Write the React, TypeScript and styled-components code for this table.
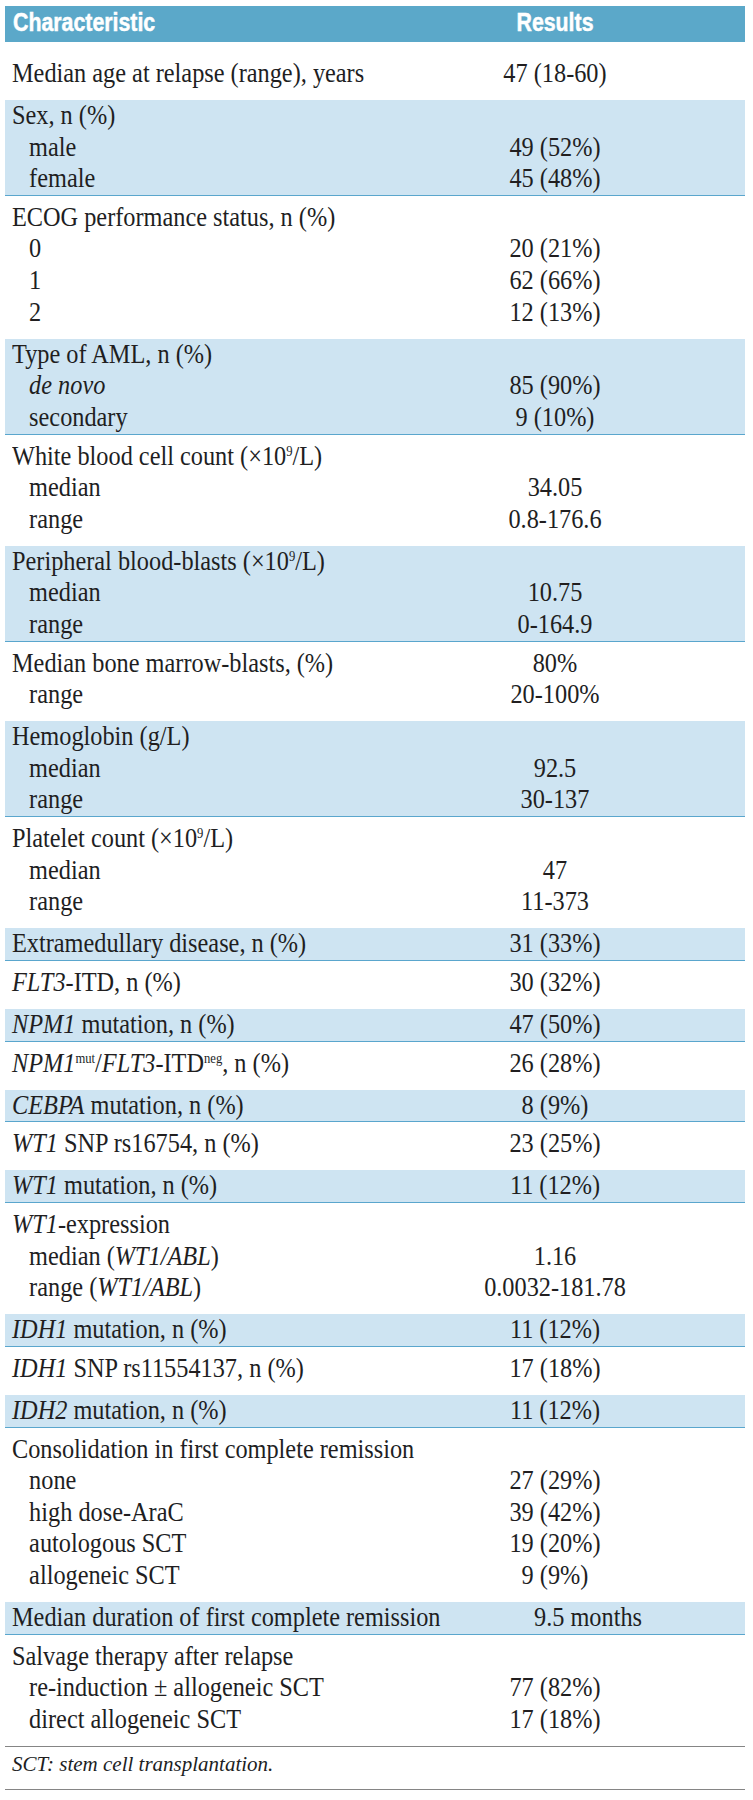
import React from 'react'
import styled, { createGlobalStyle } from 'styled-components'

const GlobalStyle = createGlobalStyle`
  html, body {
    margin: 0;
    padding: 0;
    background: #ffffff;
  }
`

const Page = styled.div`
  padding: 6px 8px 0 5px;
  width: 740px;
  color: #211e1f;
  font-family: 'Liberation Serif', 'Times New Roman', serif;
`

const HeaderBar = styled.div`
  display: grid;
  grid-template-columns: 1fr 200px;
  padding: 0 90px 3px 8px;
  height: 33px;
  line-height: 33px;
  background: #5ba8c9;
  color: #ffffff;
  font-family: 'Liberation Sans', Arial, sans-serif;
  font-weight: 700;
  font-size: 26px;
  -webkit-text-stroke: 0.5px #ffffff;
`

// the original heading face is a condensed gothic, so squeeze Arial-metric text
const HeaderCell = styled.div<{ $center?: boolean }>`
  text-align: ${p => (p.$center ? 'center' : 'left')};
  white-space: nowrap;
  transform: scaleX(0.82);
  transform-origin: ${p => (p.$center ? 'center' : 'left')} center;
`

const Block = styled.div<{ $shaded?: boolean; $first?: boolean }>`
  background: ${p => (p.$shaded ? '#cee4f2' : 'transparent')};
  border-bottom: ${p => (p.$shaded ? '1.5px solid #5aa6cd' : '0 none')};
  padding-top: ${p => (p.$shaded ? 0 : p.$first ? 16 : 6)}px;
  padding-bottom: ${p => (p.$shaded ? 0 : 10.5)}px;
`

const Line = styled.div`
  display: grid;
  grid-template-columns: 1fr 200px;
  padding: 0 90px 0 7px;
  line-height: 31.6px;
  font-size: 27px;
`

// body face is a condensed serif: Times metrics at 90% width
const Label = styled.div<{ $indent?: boolean }>`
  padding-left: ${p => (p.$indent ? 19 : 0)}px;
  white-space: nowrap;
  transform: scaleX(0.9);
  transform-origin: left center;
`

const Value = styled.div`
  text-align: center;
  white-space: nowrap;
  transform: scaleX(0.9);
  transform-origin: center;
`

const I = styled.i`
  font-style: italic;
`

const Sup = styled.sup`
  font-size: 0.52em;
  line-height: 0;
  vertical-align: 0.62em;
`

const Footnote = styled.div`
  border-top: 1px solid #858585;
  border-bottom: 1px solid #858585;
  padding: 0 0 8px 7px;
  line-height: 34px;
  font-size: 21px;
  font-style: italic;
`

type Sub = { label: React.ReactNode; value: string }
type Row = { label: React.ReactNode; value?: string; subs?: Sub[] }

const rows: Row[] = [
  { label: 'Median age at relapse (range), years', value: '47 (18-60)' },
  {
    label: 'Sex, n (%)',
    subs: [
      { label: 'male', value: '49 (52%)' },
      { label: 'female', value: '45 (48%)' },
    ],
  },
  {
    label: 'ECOG performance status, n (%)',
    subs: [
      { label: '0', value: '20 (21%)' },
      { label: '1', value: '62 (66%)' },
      { label: '2', value: '12 (13%)' },
    ],
  },
  {
    label: 'Type of AML, n (%)',
    subs: [
      { label: <I>de novo</I>, value: '85 (90%)' },
      { label: 'secondary', value: '9 (10%)' },
    ],
  },
  {
    label: (
      <>
        White blood cell count (×10<Sup>9</Sup>/L)
      </>
    ),
    subs: [
      { label: 'median', value: '34.05' },
      { label: 'range', value: '0.8-176.6' },
    ],
  },
  {
    label: (
      <>
        Peripheral blood-blasts (×10<Sup>9</Sup>/L)
      </>
    ),
    subs: [
      { label: 'median', value: '10.75' },
      { label: 'range', value: '0-164.9' },
    ],
  },
  {
    label: 'Median bone marrow-blasts, (%)',
    value: '80%',
    subs: [{ label: 'range', value: '20-100%' }],
  },
  {
    label: 'Hemoglobin (g/L)',
    subs: [
      { label: 'median', value: '92.5' },
      { label: 'range', value: '30-137' },
    ],
  },
  {
    label: (
      <>
        Platelet count (×10<Sup>9</Sup>/L)
      </>
    ),
    subs: [
      { label: 'median', value: '47' },
      { label: 'range', value: '11-373' },
    ],
  },
  { label: 'Extramedullary disease, n (%)', value: '31 (33%)' },
  {
    label: (
      <>
        <I>FLT3</I>-ITD, n (%)
      </>
    ),
    value: '30 (32%)',
  },
  {
    label: (
      <>
        <I>NPM1</I> mutation, n (%)
      </>
    ),
    value: '47 (50%)',
  },
  {
    label: (
      <>
        <I>NPM1</I>
        <Sup>mut</Sup>/<I>FLT3</I>-ITD<Sup>neg</Sup>, n (%)
      </>
    ),
    value: '26 (28%)',
  },
  {
    label: (
      <>
        <I>CEBPA</I> mutation, n (%)
      </>
    ),
    value: '8 (9%)',
  },
  {
    label: (
      <>
        <I>WT1</I> SNP rs16754, n (%)
      </>
    ),
    value: '23 (25%)',
  },
  {
    label: (
      <>
        <I>WT1</I> mutation, n (%)
      </>
    ),
    value: '11 (12%)',
  },
  {
    label: (
      <>
        <I>WT1</I>-expression
      </>
    ),
    subs: [
      {
        label: (
          <>
            median (<I>WT1/ABL</I>)
          </>
        ),
        value: '1.16',
      },
      {
        label: (
          <>
            range (<I>WT1/ABL</I>)
          </>
        ),
        value: '0.0032-181.78',
      },
    ],
  },
  {
    label: (
      <>
        <I>IDH1</I> mutation, n (%)
      </>
    ),
    value: '11 (12%)',
  },
  {
    label: (
      <>
        <I>IDH1</I> SNP rs11554137, n (%)
      </>
    ),
    value: '17 (18%)',
  },
  {
    label: (
      <>
        <I>IDH2</I> mutation, n (%)
      </>
    ),
    value: '11 (12%)',
  },
  {
    label: 'Consolidation in first complete remission',
    subs: [
      { label: 'none', value: '27 (29%)' },
      { label: 'high dose-AraC', value: '39 (42%)' },
      { label: 'autologous SCT', value: '19 (20%)' },
      { label: 'allogeneic SCT', value: '9 (9%)' },
    ],
  },
  { label: 'Median duration of first complete remission', value: '9.5 months' },
  {
    label: 'Salvage therapy after relapse',
    subs: [
      { label: 're-induction ± allogeneic SCT', value: '77 (82%)' },
      { label: 'direct allogeneic SCT', value: '17 (18%)' },
    ],
  },
]

export default function App() {
  return (
    <Page>
      <GlobalStyle />
      <HeaderBar>
        <HeaderCell>Characteristic</HeaderCell>
        <HeaderCell $center>Results</HeaderCell>
      </HeaderBar>
      {rows.map((row, index) => (
        <Block key={index} $shaded={index % 2 === 1} $first={index === 0}>
          <Line>
            <Label>{row.label}</Label>
            <Value>{row.value}</Value>
          </Line>
          {row.subs?.map((sub, subIndex) => (
            <Line key={subIndex}>
              <Label $indent>{sub.label}</Label>
              <Value>{sub.value}</Value>
            </Line>
          ))}
        </Block>
      ))}
      <Footnote>SCT: stem cell transplantation.</Footnote>
    </Page>
  )
}
